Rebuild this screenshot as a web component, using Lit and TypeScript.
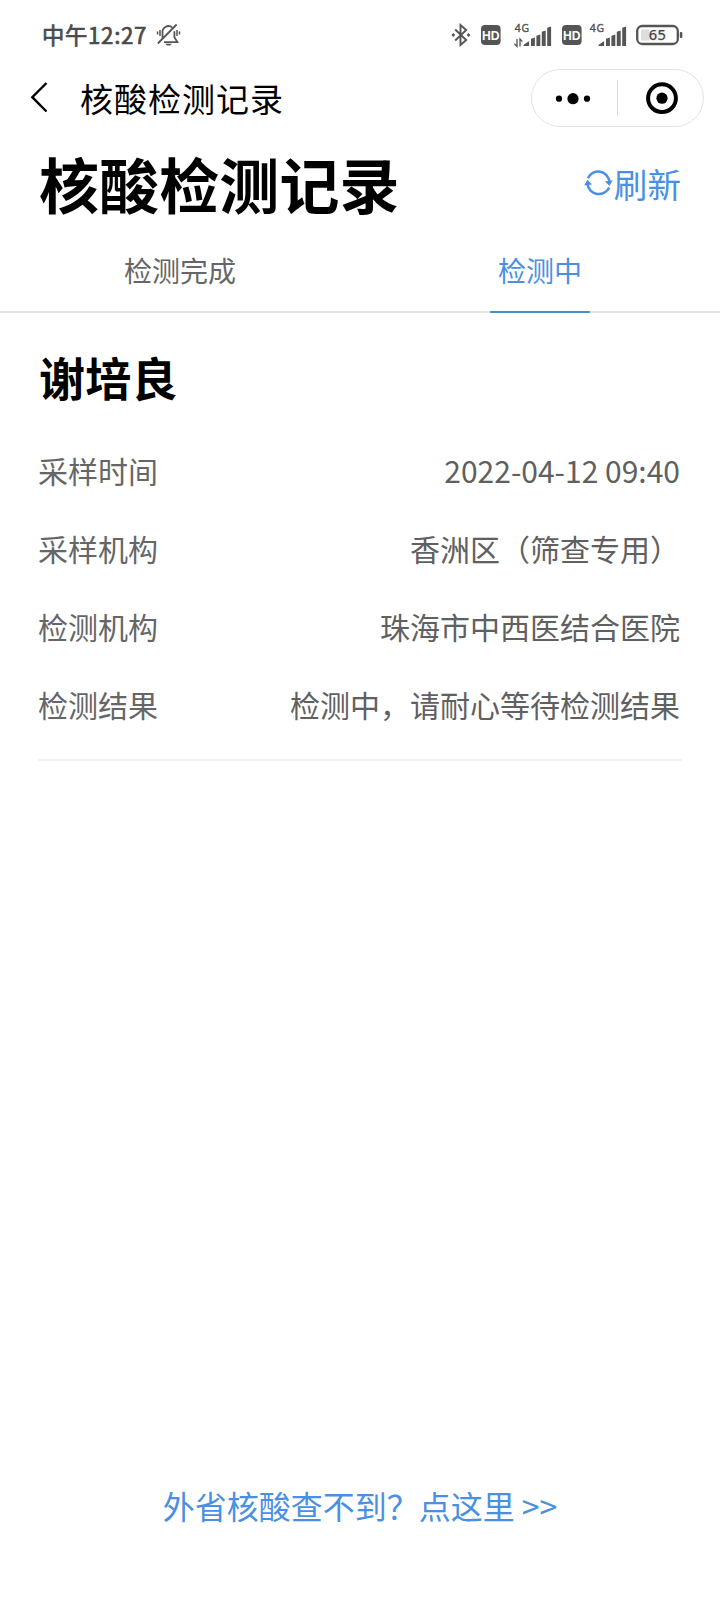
import { LitElement, html, css, svg } from "lit";
import { customElement, property, state } from "lit/decorators.js";
import { classMap } from "lit/directives/class-map.js";

const BAR_HEIGHTS = [5, 8, 11, 15, 19];

@customElement("signal-bars")
class SignalBars extends LitElement {
  @property({ type: Boolean }) data = false;

  static styles = css`
    :host { display: block; }
    svg { display: block; }
    .net { font: 400 10.4px "Noto Sans", sans-serif; letter-spacing: 0.8px; fill: #505050; stroke: #505050; stroke-width: 0.35px; }
  `;

  render() {
    return html`<svg width="38" height="26" viewBox="0 0 38 26">
      <text class="net" x="0.8" y="9.6">4G</text>
      ${this.data
        ? svg`<path d="M3 17v7.5L0.4 21.8M6 24.5V17l2.4 2.6" fill="none" stroke="#555" stroke-width="1.3"/>`
        : ""}
      ${BAR_HEIGHTS.map((h, i) =>
        i === 0
          ? svg`<path d="M9.5 24v-1l4.8-3.6h0.8V24z" fill="#555"/>`
          : svg`<path d=${`M${11.6 + i * 5.4} 24v${0.8 - h}l3.9-1.4v${h + 0.6}z`} fill="#555"/>`
      )}
    </svg>`;
  }
}

@customElement("status-bar")
class StatusBar extends LitElement {
  static styles = css`
    :host { display: flex; align-items: center; height: 69px; padding: 0 37px 0 42px; box-sizing: border-box; color: #4a4a4a; }
    svg { display: block; }
    .time { font: 400 22.3px/32px "Noto Sans CJK SC", sans-serif; -webkit-text-stroke: 0.7px #4a4a4a; letter-spacing: 0.7px; margin-bottom: 2px; }
    .bell { margin-left: 9px; }
    .icons { margin-left: auto; display: flex; align-items: center; }
    .hd { font: 700 13.5px "Liberation Sans", sans-serif; fill: #fff; }
    .g1 { margin-left: 10px; }
    .g2 { margin-left: 13px; }
    .g3 { margin-left: 10px; }
    .g4 { margin-left: 7px; }
    .g5 { margin-left: 9px; }
    .num { font: 400 14.6px "Noto Sans", sans-serif; fill: #444; stroke: #444; stroke-width: 0.25px; letter-spacing: 0.3px; }
  `;

  hd(cls: string) {
    return html`<svg class=${cls} width="20" height="20" viewBox="0 0 20 20">
      <rect width="19.6" height="20" rx="4" fill="#555"/>
      <text class="hd" x="9.8" y="15" text-anchor="middle" textLength="17.6" lengthAdjust="spacingAndGlyphs">HD</text>
    </svg>`;
  }

  render() {
    return html`
      <span class="time">中午12:27</span>
      <svg class="bell" width="25" height="24" viewBox="0 0 25 24" fill="none" stroke="#555" stroke-width="1.8">
        <path d="M6.5 15V9.5A6 6 0 0 1 16.2 4.4M18.4 8.2v6l3 4.9H8M1.8 20.5L20.6 1.5"/>
        <path d="M4 7v6M1.6 8.5v3M21 7v6M23.5 8.5v3" stroke-width="1.5"/>
        <path d="M9 20.8h7l-2 1.8h-3z" fill="#555" stroke="none"/>
      </svg>
      <div class="icons">
        <svg width="20" height="24" viewBox="0 0 20 24" fill="none" stroke="#555" stroke-width="1.9">
          <path d="M4.2 6.5l11 10.5-5.7 5V2l5.7 5-11 10.5"/>
          <path d="M0.4 12l1.9-1.9L4.2 12l-1.9 1.9zM15.6 12l1.9-1.9 1.9 1.9-1.9 1.9z" fill="#555" stroke="none"/>
        </svg>
        ${this.hd("g1")}
        <signal-bars class="g2" data></signal-bars>
        ${this.hd("g3")}
        <signal-bars class="g4"></signal-bars>
        <svg class="g5" width="47" height="22" viewBox="0 0 47 22">
          <rect x="1.2" y="2" width="40.6" height="18" rx="5" fill="none" stroke="#555" stroke-width="2.3"/>
          <path d="M6 5.5h7v11H6a1 1 0 0 1-1-1v-9a1 1 0 0 1 1-1z" fill="#ddd"/>
          <rect x="13" y="5.5" width="14" height="11" fill="#f0f0f0"/>
          <rect x="43.8" y="8" width="2.5" height="6" rx="1" fill="#555"/>
          <text class="num" x="21.5" y="16.3" text-anchor="middle">65</text>
        </svg>
      </div>
    `;
  }
}

@customElement("nav-bar")
class NavBar extends LitElement {
  @property() heading = "";

  static styles = css`
    :host { display: flex; align-items: center; height: 58px; padding: 0 16px 0 30px; box-sizing: border-box; }
    svg { display: block; }
    .title { margin: 0 auto 1px 32px; font: 400 33px/50px "Noto Sans CJK SC", sans-serif; color: #000; letter-spacing: 1px; }
    .capsule { display: flex; align-items: center; width: 173px; height: 58px; box-sizing: border-box; border: 1px solid #e4e4e4; border-radius: 29px; }
    .half { flex: 1; display: flex; justify-content: center; }
    .more { padding-right: 2px; }
    .close { padding: 0 0 0 3px; }
    .sep { width: 1px; height: 36px; background: #dcdcdc; }
  `;

  render() {
    return html`
      <svg width="18" height="32" viewBox="0 0 18 32" fill="none" stroke="#000" stroke-width="2.4">
        <path d="M16.5 1L2.3 15.2 16.5 29.5"/>
      </svg>
      <span class="title">${this.heading}</span>
      <div class="capsule">
        <div class="half more">
          <svg width="36" height="13" viewBox="0 0 36 13">
            <circle cx="4" cy="6.7" r="3.1"/><circle cx="18" cy="6.7" r="5.6"/><circle cx="32" cy="6.7" r="3.1"/>
          </svg>
        </div>
        <div class="sep"></div>
        <div class="half close">
          <svg width="34" height="34" viewBox="0 0 34 34">
            <circle cx="17" cy="17.2" r="13.9" fill="none" stroke="#000" stroke-width="4"/><circle cx="17" cy="17.2" r="5.6"/>
          </svg>
        </div>
      </div>
    `;
  }
}

@customElement("app-root")
class AppRoot extends LitElement {
  @state() active = 1;

  tabs = ["检测完成", "检测中"];
  rows = [
    ["采样时间", "2022-04-12 09:40"],
    ["采样机构", "香洲区（筛查专用）"],
    ["检测机构", "珠海市中西医结合医院"],
    ["检测结果", "检测中，请耐心等待检测结果"],
  ];

  static styles = css`
    :host { display: flex; flex-direction: column; height: 1600px; background: #fff; font-family: "Noto Sans CJK SC", sans-serif; color: #666; }
    svg { display: block; }
    .head { display: flex; align-items: center; justify-content: space-between; height: 110px; padding: 0 38px 0 39px; }
    h1 { margin: 0; padding-top: 2px; font-size: 60px; line-height: 88px; font-weight: 700; color: #000; letter-spacing: 0.1px; }
    .refresh { display: flex; align-items: center; gap: 1px; font-size: 33.6px; line-height: 50px; color: #4a90e2; padding: 4px 1px 0 0; }
    .refresh svg { margin-bottom: 2px; }
    .tabs { display: flex; height: 76px; box-sizing: border-box; border-bottom: 2px solid #e5e5e5; }
    .tab { flex: 1; display: flex; flex-direction: column; align-items: center; font-size: 28px; line-height: 66px; height: 76px; }
    .tab.on { color: #4a90e2; }
    .tab.on::after { content: ""; width: 100px; height: 2px; margin-top: 8px; background: #4a90c8; }
    .card { margin: 0 38px; border-bottom: 2px solid #f2f2f2; padding: 29px 0 16px; }
    h2 { margin: 0 0 21px 1px; font-size: 46px; line-height: 68px; font-weight: 700; color: #000; letter-spacing: 0.2px; }
    .row { display: flex; justify-content: space-between; font-size: 30px; line-height: 78px; padding-right: 2px; }
    .value { color: #606060; }
    .foot { margin: auto 0 71px; text-align: center; font-size: 32px; line-height: 48px; color: #4a90e2; }
  `;

  render() {
    return html`
      <status-bar></status-bar>
      <nav-bar heading="核酸检测记录"></nav-bar>
      <div class="head">
        <h1>核酸检测记录</h1>
        <div class="refresh">
          <svg width="29" height="28" viewBox="0 0 29 28">
            <path d="M3.8 9.2A11.4 11.4 0 0 1 25.5 13M25.2 18.4A11.4 11.4 0 0 1 3.5 15" fill="none" stroke="#4a90e2" stroke-width="2.5"/>
            <path d="M20.8 12.4l7.9-1.2-3 5.6zM0.2 16.6l7.9-1.2-4.8-4.6z" fill="#4a90e2"/>
          </svg>
          <span>刷新</span>
        </div>
      </div>
      <div class="tabs">
        ${this.tabs.map(
          (t, i) => html`<div class=${classMap({ tab: true, on: i === this.active })} @click=${() => (this.active = i)}>${t}</div>`
        )}
      </div>
      <div class="card">
        <h2>谢培良</h2>
        ${this.rows.map(([k, v]) => html`<div class="row"><span>${k}</span><span class="value">${v}</span></div>`)}
      </div>
      <div class="foot">外省核酸查不到？点这里 &gt;&gt;</div>
    `;
  }
}
